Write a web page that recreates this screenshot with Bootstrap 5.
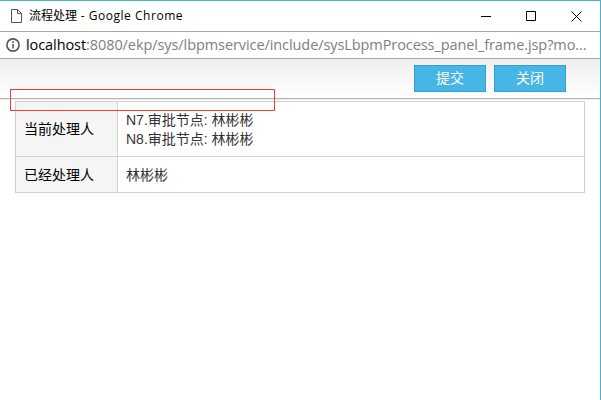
<!DOCTYPE html>
<html lang="zh-CN">
<head>
<meta charset="utf-8">
<title>流程处理</title>
<link href="https://cdn.jsdelivr.net/npm/bootstrap@5.3.0/dist/css/bootstrap.min.css" rel="stylesheet">
<style>
body{height:400px;font-family:"Liberation Sans","Noto Sans CJK SC",sans-serif;font-size:14px;color:#000}
.win{height:400px;border-top:1px solid #45b4c5;border-right:1px solid #45b4c5}
.titlebar{height:30px;padding-left:11px;padding-right:18px}
.caption{font:12px/18px "Open Sans","Noto Sans CJK SC",sans-serif;margin-left:7px}
.latin{letter-spacing:.53px}
.controls{gap:34px}
.address{height:28px;border-top:1px solid #a5a5a5;border-bottom:1px solid #a5a5a5;padding-left:6px}
.url{font:14.5px/20px "Open Sans",sans-serif;letter-spacing:-.08px;color:#808080;margin-left:6px}
.toolbar{height:40px;background:linear-gradient(#efefef,#fff);border-bottom:1px solid #b3b3b3;padding:6px 34px 0 0;gap:8px}
.act,.act:hover{width:72px;height:27px;padding:0;line-height:23px;font-size:14px;border-radius:0;color:#fff;background:#47b5e6;border:1px solid #359fd4}
.content-pane{padding:2px 15px 0;border-top:1px solid #eee;margin-top:0;padding-top:1px}
.flow{border:1px solid #d2d2d2;width:570px}
.flow .label-cell{width:102px;background:#f5f5f5;border-right:1px solid #d2d2d2;padding-left:8px;padding-top:1px}
.flow .value-cell{padding-left:8px;padding-top:2px;line-height:19px;color:#333}
.first-line{height:54px}
.second-line{height:36px;border-top:1px solid #d2d2d2}
.marker{left:10px;top:89px;width:265px;height:22px;border:1px solid #f53b3b}
</style>
</head>
<body class="bg-white overflow-hidden">
<div class="win">
  <header class="titlebar d-flex align-items-center">
    <svg width="11" height="14" fill="none" stroke="#555"><path d="M.5.5h6l4 4v9H.5zM6.500.5v4h4"/></svg>
    <span class="caption">流程处理<span class="latin"> - Google Chrome</span></span>
    <div class="controls d-flex ms-auto">
      <svg width="11" height="11" stroke="#000"><path d="M0 5.500h10"/></svg>
      <svg width="11" height="11" stroke="#000" fill="none"><path d="M.5.5h9v9H.5z"/></svg>
      <svg width="11" height="11" stroke="#000"><path d="M.5.5l10 10M10.500.5l-10 10"/></svg>
    </div>
  </header>
  <div class="address d-flex align-items-center">
    <svg width="14" height="14" fill="none" stroke="#555" stroke-width="1.6"><circle cx="7" cy="7" r="6.100"/><path d="M7 6v4.500M7 3.300v1.700"/></svg>
    <span class="url text-nowrap"><span class="text-black">localhost</span>:8080/ekp/sys/lbpmservice/include/sysLbpmProcess_panel_frame.jsp?mo...</span>
  </div>
  <div class="toolbar d-flex justify-content-end align-items-start">
    <button class="btn act">提交</button>
    <button class="btn act">关闭</button>
  </div>
  <main class="content-pane">
    <div class="flow">
      <div class="first-line d-flex">
        <div class="label-cell d-flex align-items-center">当前处理人</div>
        <div class="value-cell d-flex flex-column justify-content-center"><div>N7.审批节点: 林彬彬</div><div>N8.审批节点: 林彬彬</div></div>
      </div>
      <div class="second-line d-flex">
        <div class="label-cell d-flex align-items-center">已经处理人</div>
        <div class="value-cell d-flex align-items-center">林彬彬</div>
      </div>
    </div>
  </main>
</div>
<div class="marker position-absolute"></div>
<script src="https://cdn.jsdelivr.net/npm/bootstrap@5.3.0/dist/js/bootstrap.bundle.min.js"></script>
</body>
</html>
